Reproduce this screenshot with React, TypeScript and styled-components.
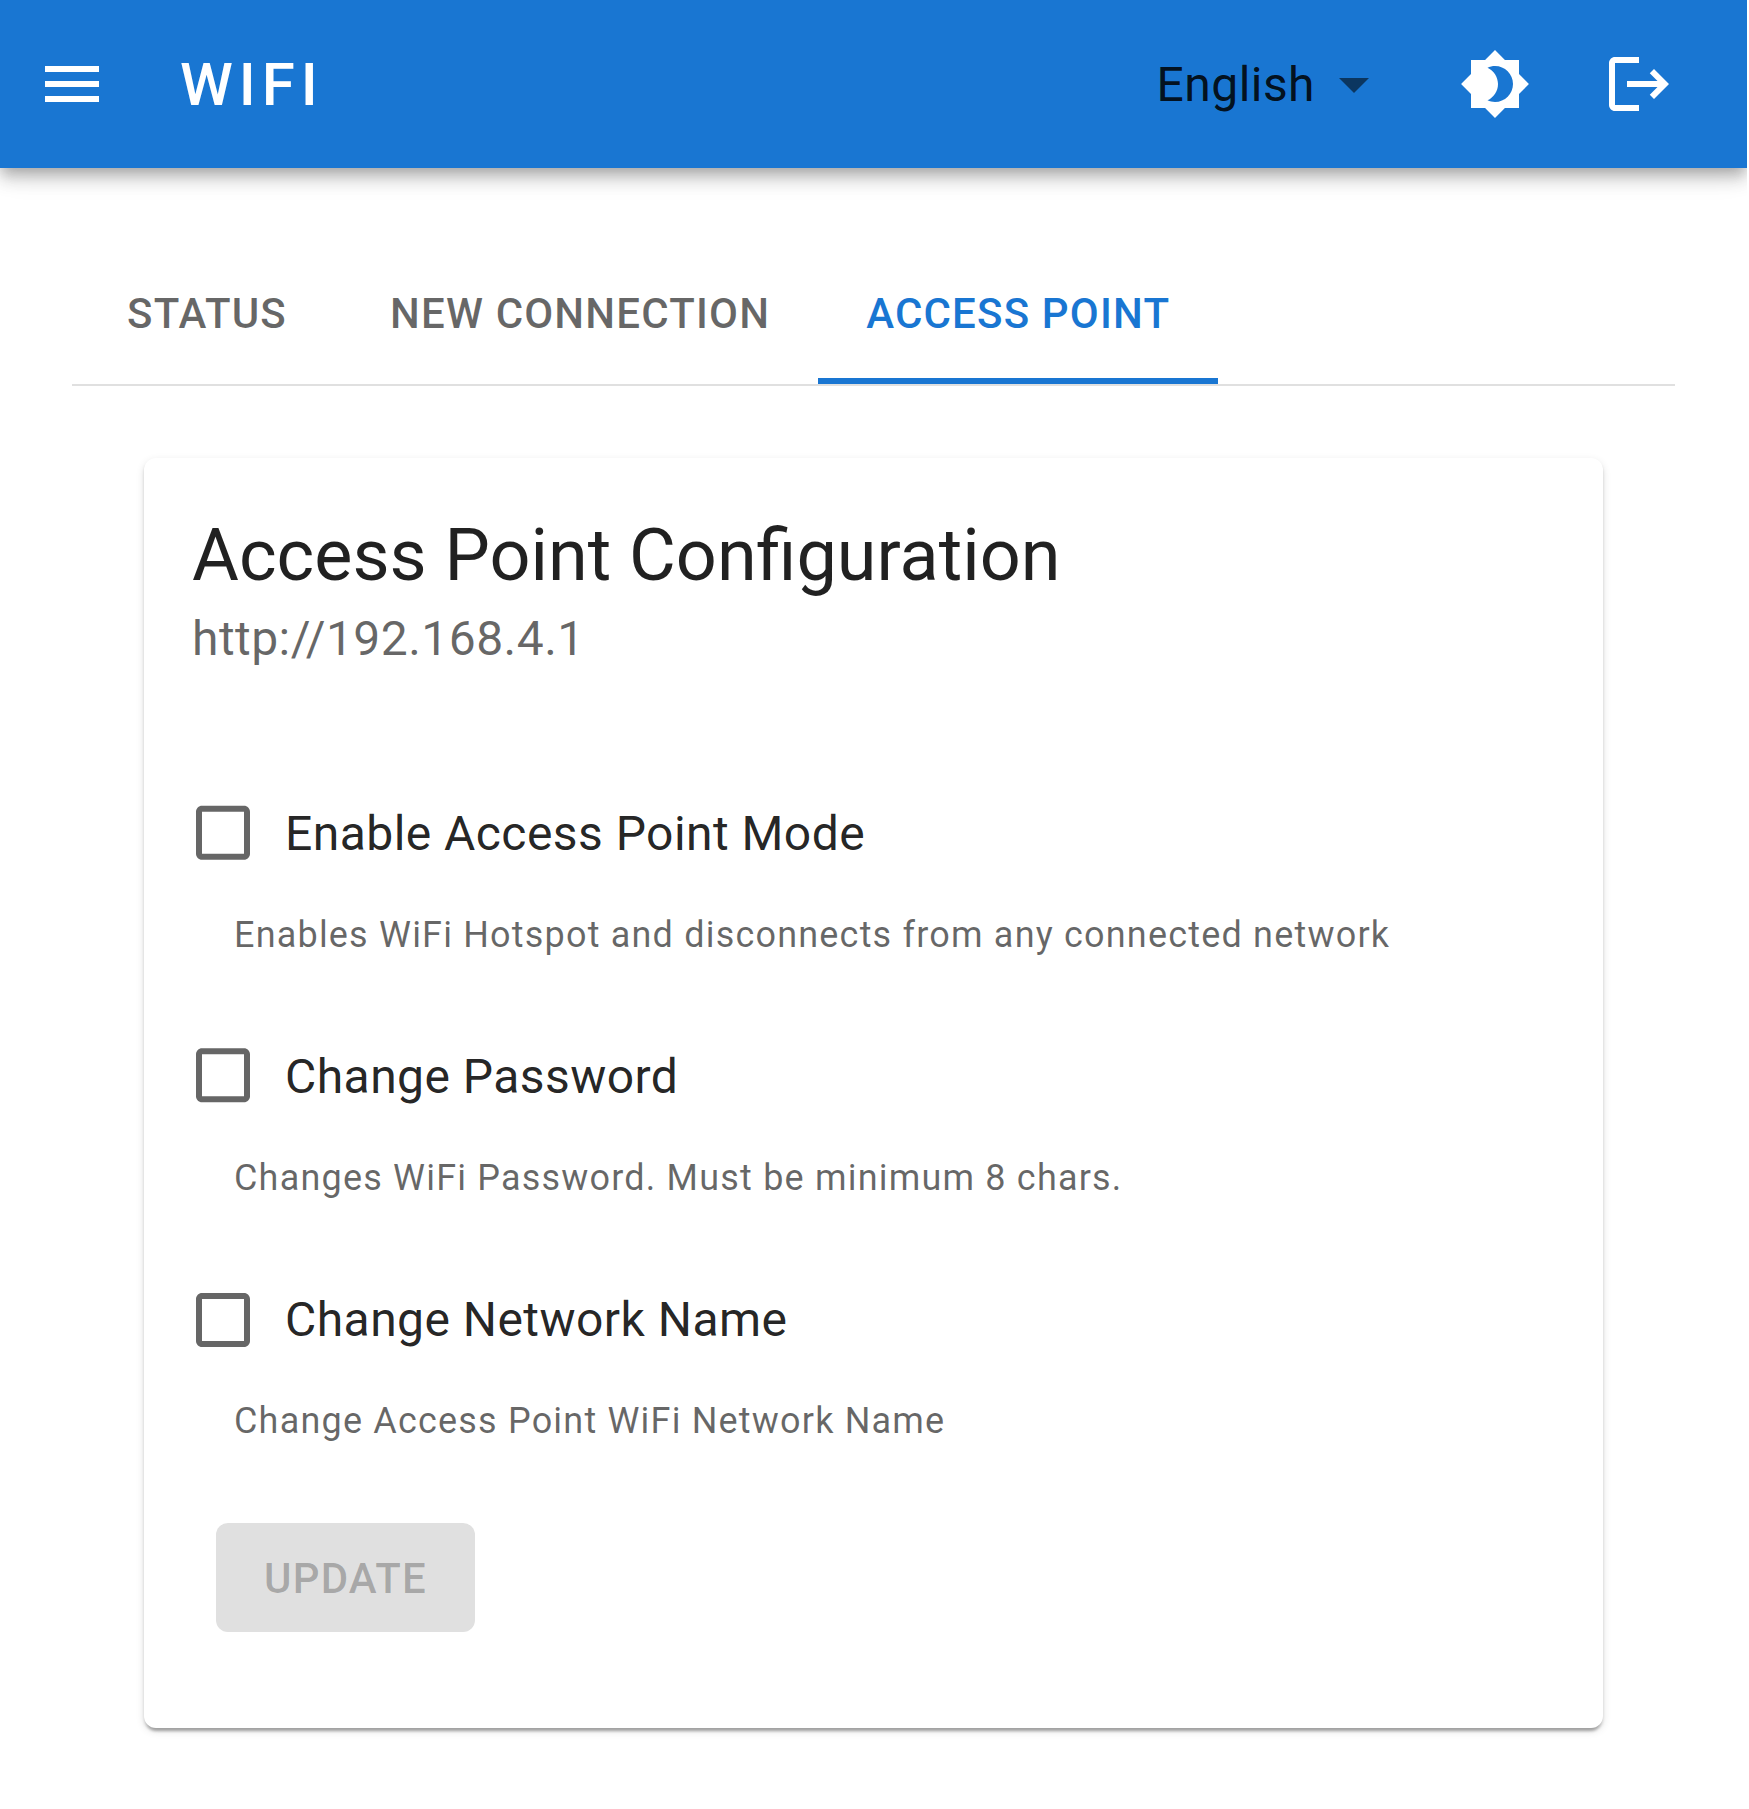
import React, { useState } from "react";
import styled, { createGlobalStyle } from "styled-components";

const GlobalStyle = createGlobalStyle`
  *, *::before, *::after { box-sizing: border-box; }
  body {
    margin: 0;
    background: #fff;
    color: rgba(0, 0, 0, 0.87);
    font-family: Roboto, "Liberation Sans", sans-serif;
    -webkit-font-smoothing: antialiased;
  }
  button { font-family: inherit; border: 0; background: none; padding: 0; margin: 0; }
`;

const Page = styled.div`
  width: 1747px;
  min-height: 1809px;
  overflow: hidden;
`;

const AppBar = styled.header`
  display: flex;
  align-items: center;
  height: 168px;
  padding: 0 72px 0 36px;
  background: #1976d2;
  color: #fff;
  box-shadow: 0 6px 12px -3px rgba(0, 0, 0, 0.2), 0 12px 15px 0 rgba(0, 0, 0, 0.14),
    0 3px 30px 0 rgba(0, 0, 0, 0.12);
`;

const IconButton = styled.button`
  display: flex;
  color: inherit;
`;

const Icon = styled.svg`
  display: block;
  flex: none;
  width: 72px;
  height: 72px;
  fill: currentColor;
`;

const AppTitle = styled.h1`
  flex: 1;
  margin: 0 0 0 72px;
  padding-top: 2px;
  font-size: 60px;
  font-weight: 500;
  line-height: 96px;
  letter-spacing: 6px;
`;

const LanguageSelect = styled.button`
  display: flex;
  align-items: center;
  margin-right: 69px;
  color: rgba(0, 0, 0, 0.87);
  font-size: 48px;
  line-height: 69px;
  letter-spacing: 0.45px;
`;

const SelectArrow = styled(Icon)`
  margin-left: 3px;
  color: rgba(0, 0, 0, 0.54);
`;

const Actions = styled.div`
  display: flex;
  gap: 72px;
`;

const Content = styled.main`
  padding: 72px;
`;

const Tabs = styled.div`
  display: flex;
  border-bottom: 2px solid #e0e0e0;
`;

const Tab = styled.button<{ $active: boolean }>`
  height: 144px;
  min-width: 270px;
  padding: 4px 48px 0;
  border-bottom: 6px solid ${(p) => (p.$active ? "#1976d2" : "transparent")};
  border-top: 6px solid transparent;
  color: ${(p) => (p.$active ? "#1976d2" : "rgba(0, 0, 0, 0.6)")};
  font-size: 42px;
  font-weight: 500;
  line-height: 52px;
  letter-spacing: 1.18px;
  white-space: nowrap;
`;

const Card = styled.section`
  margin: 72px 72px 0;
  height: 1270px;
  border-radius: 12px;
  background: #fff;
  box-shadow: 0 6px 3px -3px rgba(0, 0, 0, 0.2), 0 3px 3px 0 rgba(0, 0, 0, 0.14),
    0 3px 9px 0 rgba(0, 0, 0, 0.12);
`;

const CardHeader = styled.div`
  padding: 50px 48px 47px;
`;

const CardTitle = styled.h2`
  margin: 0;
  font-size: 71.95px;
  font-weight: 400;
  line-height: 96px;
`;

const CardSubheader = styled.p`
  margin: -1px 0 0;
  color: rgba(0, 0, 0, 0.6);
  font-size: 48px;
  line-height: 72px;
  letter-spacing: 0.45px;
`;

const Form = styled.form`
  display: flex;
  flex-direction: column;
  align-items: flex-start;
  gap: 48px;
  padding: 48px;
`;

const Option = styled.div`
  display: flex;
  flex-direction: column;
`;

const OptionLabel = styled.label`
  display: flex;
  align-items: center;
  gap: 26px;
  height: 126px;
  margin-left: -5px;
`;

const OptionText = styled.span`
  padding-top: 2px;
  font-size: 48px;
  line-height: 72px;
  letter-spacing: 0.45px;
`;

const CheckboxIcon = styled(Icon)<{ $drop: number }>`
  color: rgba(0, 0, 0, 0.6);
  transform: translateY(${(p) => p.$drop}px);
`;

const HelperText = styled.p`
  margin: 10px 42px -1px;
  color: rgba(0, 0, 0, 0.6);
  font-size: 36px;
  line-height: 59.75px;
  letter-spacing: 1.19px;
`;

const UpdateButton = styled.button`
  width: 259px;
  height: 109px;
  margin: 25px 24px 0;
  padding: 2px 0 0;
  border-radius: 12px;
  background: #e0e0e0;
  color: rgba(0, 0, 0, 0.26);
  font-size: 42px;
  font-weight: 500;
  line-height: 73.5px;
  letter-spacing: 1.2px;
`;

const tabs = ["STATUS", "NEW CONNECTION", "ACCESS POINT"];

const options = [
  {
    label: "Enable Access Point Mode",
    help: "Enables WiFi Hotspot and disconnects from any connected network",
    drop: -0.3,
  },
  {
    label: "Change Password",
    help: "Changes WiFi Password. Must be minimum 8 chars.",
    drop: -0.7,
  },
  {
    label: "Change Network Name",
    help: "Change Access Point WiFi Network Name",
    drop: 1,
  },
];

export default function App() {
  const [active, setActive] = useState("ACCESS POINT");
  return (
    <>
      <GlobalStyle />
      <Page>
        <AppBar>
          <IconButton aria-label="Menu">
            <Icon viewBox="0 0 24 24">
              <path d="M3 18h18v-2H3v2zm0-5h18v-2H3v2zm0-7v2h18V6H3z" />
            </Icon>
          </IconButton>
          <AppTitle>WIFI</AppTitle>
          <LanguageSelect>
            English
            <SelectArrow viewBox="0 0 24 24">
              <path d="M7 10l5 5 5-5z" />
            </SelectArrow>
          </LanguageSelect>
          <Actions>
            <IconButton aria-label="Toggle theme">
              <Icon viewBox="0 0 24 24">
                <path d="M20 8.69V4h-4.69L12 .69 8.69 4H4v4.69L.69 12 4 15.31V20h4.69L12 23.31 15.31 20H20v-4.69L23.31 12 20 8.69zM12 18c-.89 0-1.74-.2-2.5-.55C11.56 16.5 13 14.42 13 12s-1.44-4.5-3.5-5.45C10.26 6.2 11.11 6 12 6c3.31 0 6 2.69 6 6s-2.69 6-6 6z" />
              </Icon>
            </IconButton>
            <IconButton aria-label="Log out">
              <Icon viewBox="0 0 24 24">
                <path d="m17 7-1.41 1.41L18.17 11H8v2h10.17l-2.58 2.58L17 17l5-5zM4 5h8V3H4c-1.1 0-2 .9-2 2v14c0 1.1.9 2 2 2h8v-2H4V5z" />
              </Icon>
            </IconButton>
          </Actions>
        </AppBar>
        <Content>
          <Tabs>
            {tabs.map((t) => (
              <Tab key={t} $active={t === active} onClick={() => setActive(t)}>
                {t}
              </Tab>
            ))}
          </Tabs>
          <Card>
            <CardHeader>
              <CardTitle>Access Point Configuration</CardTitle>
              <CardSubheader>http://192.168.4.1</CardSubheader>
            </CardHeader>
            <Form>
              {options.map((o) => (
                <Option key={o.label}>
                  <OptionLabel>
                    <CheckboxIcon viewBox="0 0 24 24" $drop={o.drop}>
                      <path d="M19 5v14H5V5h14m0-2H5c-1.1 0-2 .9-2 2v14c0 1.1.9 2 2 2h14c1.1 0 2-.9 2-2V5c0-1.1-.9-2-2-2z" />
                    </CheckboxIcon>
                    <OptionText>{o.label}</OptionText>
                  </OptionLabel>
                  <HelperText>{o.help}</HelperText>
                </Option>
              ))}
              <UpdateButton type="button" disabled>
                UPDATE
              </UpdateButton>
            </Form>
          </Card>
        </Content>
      </Page>
    </>
  );
}
